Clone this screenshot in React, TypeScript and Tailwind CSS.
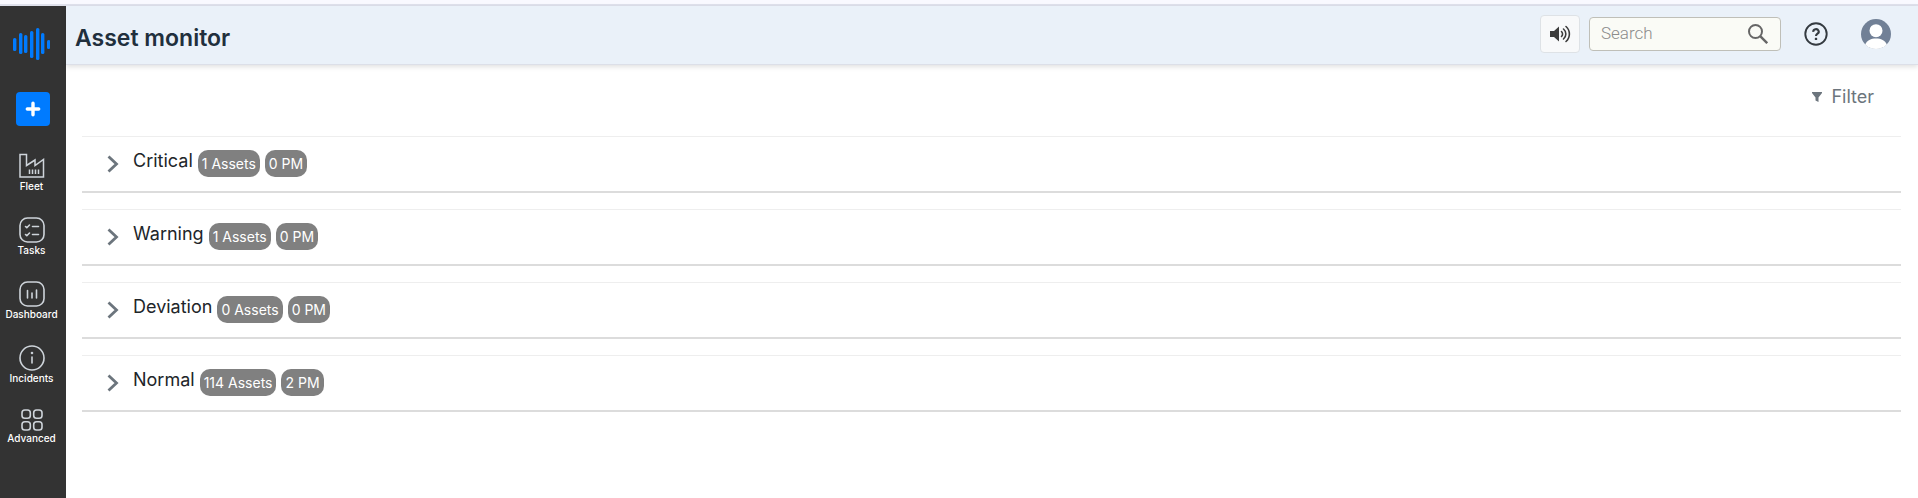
import React from "react";

function WaveLogo() {
  const bars = [
    [13, 38, 50],
    [19, 33, 53],
    [24, 35, 52],
    [30, 31, 57],
    [36, 28, 59],
    [41, 33, 53],
    [47, 40, 48],
  ];
  return (
    <svg viewBox="0 0 38 32" className="h-8 w-[38px]" fill="#007bff" aria-hidden="true">
      {bars.map(([x, top, bottom]) => (
        <rect key={x} x={x - 12} y={top - 28} width="3.4" height={bottom - top + 1} rx="1.6" />
      ))}
    </svg>
  );
}

function FleetIcon() {
  return (
    <svg viewBox="0 0 26 26" className="size-[26px] text-[#ced4da]" fill="none" stroke="currentColor" strokeWidth="1.5" aria-hidden="true">
      <path d="M1 24V1.500h6.500v11L16 7v5.500L24.500 6.500v17.500z" />
      <path d="M10.500 16.500v4.500M13.500 16.500v4.500M16.500 16.500v4.500M19.500 16.500v4.500" />
    </svg>
  );
}

function TasksIcon() {
  return (
    <svg viewBox="0 0 26 26" className="size-[26px] text-[#ced4da]" fill="none" stroke="currentColor" strokeWidth="1.6" strokeLinecap="round" strokeLinejoin="round" aria-hidden="true">
      <rect x="1" y="1" width="24" height="24" rx="7.500" />
      <path d="M6.500 9.500l1.300 1.200 2.700-2.700M13.500 9.500h6M6.500 17.500l1.300 1.200 2.700-2.700M13.500 17.500h6" />
    </svg>
  );
}

function DashboardIcon() {
  return (
    <svg viewBox="0 0 26 26" className="size-[26px] text-[#ced4da]" fill="none" stroke="currentColor" strokeWidth="1.6" strokeLinecap="round" aria-hidden="true">
      <rect x="1" y="1" width="24" height="24" rx="7.500" />
      <path d="M8.500 9.500v7.500M13 12v5M17.500 9v8" />
    </svg>
  );
}

function IncidentsIcon() {
  return (
    <svg viewBox="0 0 26 26" className="size-[26px] text-[#ced4da]" fill="none" stroke="currentColor" strokeWidth="1.6" strokeLinecap="round" aria-hidden="true">
      <circle cx="13" cy="13" r="12" />
      <path d="M13 12v6" />
      <circle cx="13" cy="8" r="0.500" fill="currentColor" />
    </svg>
  );
}

function AdvancedIcon() {
  return (
    <svg viewBox="0 0 22 22" className="size-[22px] text-[#ced4da]" fill="none" stroke="currentColor" strokeWidth="1.6" aria-hidden="true">
      <rect x="1" y="1" width="8.300" height="8.300" rx="2.800" />
      <rect x="12.700" y="1" width="8.300" height="8.300" rx="2.800" />
      <rect x="1" y="12.700" width="8.300" height="8.300" rx="2.800" />
      <rect x="12.700" y="12.700" width="8.300" height="8.300" rx="2.800" />
    </svg>
  );
}

const navItems = [
  { label: "Fleet", Icon: FleetIcon },
  { label: "Tasks", Icon: TasksIcon },
  { label: "Dashboard", Icon: DashboardIcon },
  { label: "Incidents", Icon: IncidentsIcon },
  { label: "Advanced", Icon: AdvancedIcon },
];

const groups = [
  { name: "Critical", assets: 1, pm: 0 },
  { name: "Warning", assets: 1, pm: 0 },
  { name: "Deviation", assets: 0, pm: 0 },
  { name: "Normal", assets: 114, pm: 2 },
];

function Sidebar() {
  return (
    <aside className="flex w-[66px] shrink-0 flex-col items-center bg-[#333333] pt-[22px]">
      <a href="#home" aria-label="Home" className="pr-1">
        <WaveLogo />
      </a>
      <button type="button" aria-label="Add" className="mt-8 flex size-[34px] items-center justify-center rounded bg-[#007bff] text-white">
        <svg viewBox="0 0 16 16" className="size-4" stroke="currentColor" strokeWidth="3.4" strokeLinecap="round" aria-hidden="true">
          <path d="M8 2.300v11.400M2.300 8h11.400" />
        </svg>
      </button>
      <nav className="mt-[27px] flex flex-col items-center gap-6 pr-[3px]">
        {navItems.map(({ label, Icon }) => (
          <a key={label} href={"#" + label.toLowerCase()} className="flex flex-col items-center text-[10px] leading-[14px] font-medium text-white">
            <Icon />
            {label}
          </a>
        ))}
      </nav>
    </aside>
  );
}

function Header() {
  return (
    <header className="relative flex h-[59px] items-center border-b border-[#dcdfe8] bg-[#eaf1f9] pr-[27px] pb-[2px] pl-[9px] shadow-[0_2px_5px_rgba(0,0,0,0.12)]">
      <h1 className="mt-2 flex-1 text-[23px] leading-8 font-semibold text-[#212f3d]">Asset monitor</h1>
      <button type="button" aria-label="Sound" className="flex h-[38px] w-10 items-center justify-center rounded border border-[#dee2e6] bg-[#f8f9fa] text-[#3c3c3c]">
        <svg viewBox="0 0 22 18" className="h-[18px] w-[22px]" fill="none" stroke="currentColor" strokeWidth="1.600" strokeLinecap="round" aria-hidden="true">
          <path d="M1 6h4l5-4.500v15L5 12H1z" fill="currentColor" stroke="none" />
          <path d="M12.500 6.500a3.500 3.500 0 0 1 0 5M14.500 4a6.500 6.500 0 0 1 0 10M17 1.500a10 10 0 0 1 0 15" />
        </svg>
      </button>
      <label className="ml-[9px] flex h-[34px] w-48 items-center rounded border border-[#bfbfb8] bg-[#fafbf6] pr-3 pl-[11px]">
        <input type="text" aria-label="Search" placeholder="Search" className="min-w-0 flex-1 bg-transparent font-[Roboto,sans-serif] text-[17px] font-light outline-none placeholder:text-[#8c8c8c]" />
        <svg viewBox="0 0 20 20" className="size-5" fill="none" stroke="#666666" strokeWidth="2" aria-hidden="true">
          <circle cx="7.500" cy="7.500" r="6.500" />
          <path d="M12.200 12.200l7 7" strokeWidth="2.400" />
        </svg>
      </label>
      <button type="button" aria-label="Help" className="ml-[23px] text-[#343a40]">
        <svg viewBox="0 0 24 24" className="size-6" fill="none" stroke="currentColor" strokeWidth="1.900" aria-hidden="true">
          <circle cx="12" cy="12" r="10.700" />
          <path d="M9.300 9.800a2.700 2.500 0 1 1 4.200 1.900c-1.100.8-1.500 1.200-1.500 2.400" strokeWidth="2.100" />
          <path d="M12 15.800v2.200" strokeWidth="2.300" />
        </svg>
      </button>
      <button type="button" aria-label="Account" className="ml-[33px]">
        <svg viewBox="0 0 30 30" className="size-[30px]" aria-hidden="true">
          <circle cx="15" cy="15" r="15" fill="#718096" />
          <circle cx="15" cy="11.700" r="6.500" fill="#fff" />
          <path d="M4.200 25.400C6 21.500 10 19.500 15 19.500s9 2 10.800 5.900A15 15 0 0 1 4.200 25.400z" fill="#fff" />
        </svg>
      </button>
    </header>
  );
}

function Badge({ children }: { children: React.ReactNode }) {
  return <span className="rounded-[10px] bg-[#808080] px-1 text-sm leading-[27px] text-white">{children}</span>;
}

export default function App() {
  return (
    <div className="flex min-h-screen flex-col bg-white font-[Inter,sans-serif]">
      <div className="h-[6px] border-b-2 border-[#dfe1ec] bg-[#f9f9ff]" />
      <div className="flex flex-1">
        <Sidebar />
        <div className="min-w-0 flex-1">
          <Header />
          <main className="px-4 pr-[17px]">
            <div className="flex h-[71px] items-start justify-end pt-5 pr-[27px]">
              <button type="button" className="flex items-center gap-2 text-lg leading-6 text-[#6c757d]">
                <svg viewBox="0 0 12 12" className="size-3" fill="#6c757d" aria-hidden="true">
                  <path d="M1 1h10v1L7.500 6.500V11l-3-1.500v-3L1 2z" />
                </svg>
                Filter
              </button>
            </div>
            <div className="flex flex-col gap-4">
              {groups.map((group) => (
                <button
                  type="button"
                  key={group.name}
                  aria-expanded="false"
                  className="flex h-[57px] w-full items-start border-t border-b-2 border-t-[#eeeeee] border-b-[#dcdcdc] pt-[13px] pl-[25px] text-left"
                >
                  <svg viewBox="0 0 12 18" className="mt-[5px] h-[18px] w-3" fill="none" stroke="#6c757d" strokeWidth="2.800" aria-hidden="true">
                    <path d="M1.500 1.500L9.500 9l-8 7.500" />
                  </svg>
                  <span className="ml-[14px] text-lg leading-[22px] text-[#212529]">{group.name}</span>
                  <span className="ml-[5px] flex gap-[5px]">
                    <Badge>{group.assets} Assets</Badge>
                    <Badge>{group.pm} PM</Badge>
                  </span>
                </button>
              ))}
            </div>
          </main>
        </div>
      </div>
    </div>
  );
}
